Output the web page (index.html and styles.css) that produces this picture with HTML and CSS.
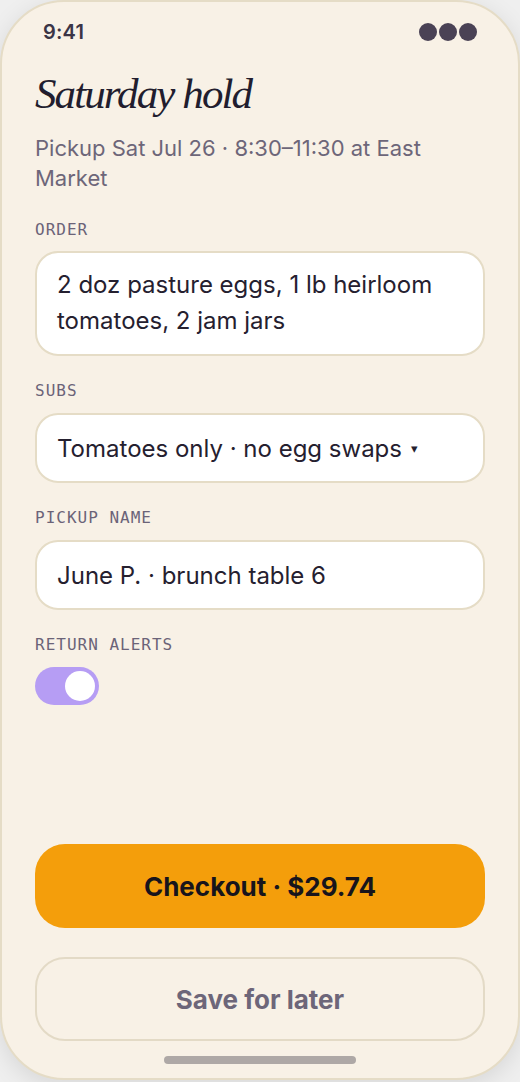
FILE: index.html
```html
<!DOCTYPE html>
<html>
<head>
<meta charset="utf-8">
<link rel="stylesheet" href="styles.css">
</head>
<body>
<div class="phone">
  <div class="status">
    <span class="time">9:41</span>
    <span class="dots"><i></i><i></i><i></i></span>
  </div>
  <h1 class="title">Saturday hold</h1>
  <p class="sub">Pickup Sat Jul 26 · 8:30–11:30 at East Market</p>

  <div class="field">
    <div class="label">ORDER</div>
    <div class="box multi">2 doz pasture eggs, 1 lb heirloom tomatoes, 2 jam jars</div>
  </div>
  <div class="field">
    <div class="label">SUBS</div>
    <div class="box">Tomatoes only · no egg swaps <span class="caret">▾</span></div>
  </div>
  <div class="field">
    <div class="label">PICKUP NAME</div>
    <div class="box">June P. · brunch table 6</div>
  </div>
  <div class="field">
    <div class="label">RETURN ALERTS</div>
    <div class="toggle"><span class="knob"></span></div>
  </div>

  <div class="spacer"></div>

  <div class="actions">
    <button class="btn primary">Checkout · $29.74</button>
    <button class="btn secondary">Save for later</button>
  </div>
  <div class="home"><span></span></div>
</div>
</body>
</html>
```

FILE: styles.css
```css
* { box-sizing: border-box; }
html, body { margin: 0; padding: 0; }
body {
  background: #efefef;
  width: 520px;
  height: 1082px;
  overflow: hidden;
  font-family: Inter, "Noto Sans", sans-serif;
}
.phone {
  width: 520px;
  height: 1080px;
  border: 2px solid #e5dcc6;
  border-radius: 64px;
  background: #f8f1e6;
  box-shadow: 0 6px 24px rgba(0,0,0,0.10);
  padding: 0 33px;
  display: flex;
  flex-direction: column;
}
.status {
  display: flex;
  justify-content: space-between;
  align-items: center;
  height: 30px;
  margin-top: 15px;
  padding: 0 8px 0 8px;
}
.time {
  font-weight: 600;
  font-size: 20px;
  color: #3b3546;
  letter-spacing: 0.2px;
}
.dots { display: flex; gap: 2px; }
.dots i {
  width: 18px; height: 18px; border-radius: 50%;
  background: #4a4255; display: block;
}
.title {
  margin: 22px 0 0;
  font-family: "Liberation Serif", serif;
  font-style: italic;
  font-weight: 400;
  font-size: 43px;
  line-height: 50px;
  color: #221d2e;
  letter-spacing: -1.9px;
}
.sub {
  margin: 14px 0 0;
  font-size: 22px;
  line-height: 30px;
  color: #6d6679;
}
.field { margin-top: 27px; }
.field + .field { margin-top: 25px; }
.label {
  font-family: "DejaVu Sans Mono", monospace;
  font-size: 16px;
  letter-spacing: 1px;
  color: #6b6378;
  line-height: 20px;
  margin-bottom: 11px;
}
.field + .field .label { margin-bottom: 12px; }
.box {
  background: #fff;
  border: 2px solid #e5dcc6;
  border-radius: 23px;
  height: 70px;
  padding: 0 20px;
  display: flex;
  align-items: center;
  font-size: 24px;
  color: #25202f;
}
.box.multi {
  display: block;
  height: 105px;
  padding: 14px 20px;
  line-height: 36px;
}
.caret { font-size: 13px; margin-left: 9px; }
.toggle {
  width: 64px; height: 38px;
  border-radius: 19px;
  background: #b69df4;
  position: relative;
}
.knob {
  position: absolute;
  right: 4px; top: 4px;
  width: 30px; height: 30px;
  border-radius: 50%;
  background: #fff;
}
.spacer { flex: 1; }
.actions { display: flex; flex-direction: column; gap: 29px; }
.btn {
  width: 100%;
  height: 84px;
  border-radius: 30px;
  font-family: Inter, sans-serif;
  font-weight: 700;
  font-size: 26px;
}
.primary {
  background: #f49e0b;
  border: none;
  color: #17141c;
}
.secondary {
  background: transparent;
  border: 2px solid #e3dac6;
  color: #6d6679;
}
.home {
  height: 37px;
  display: flex;
  justify-content: center;
  align-items: center;
}
.home span {
  width: 192px; height: 8px; border-radius: 4px; background: #aea8a6;
}
```
